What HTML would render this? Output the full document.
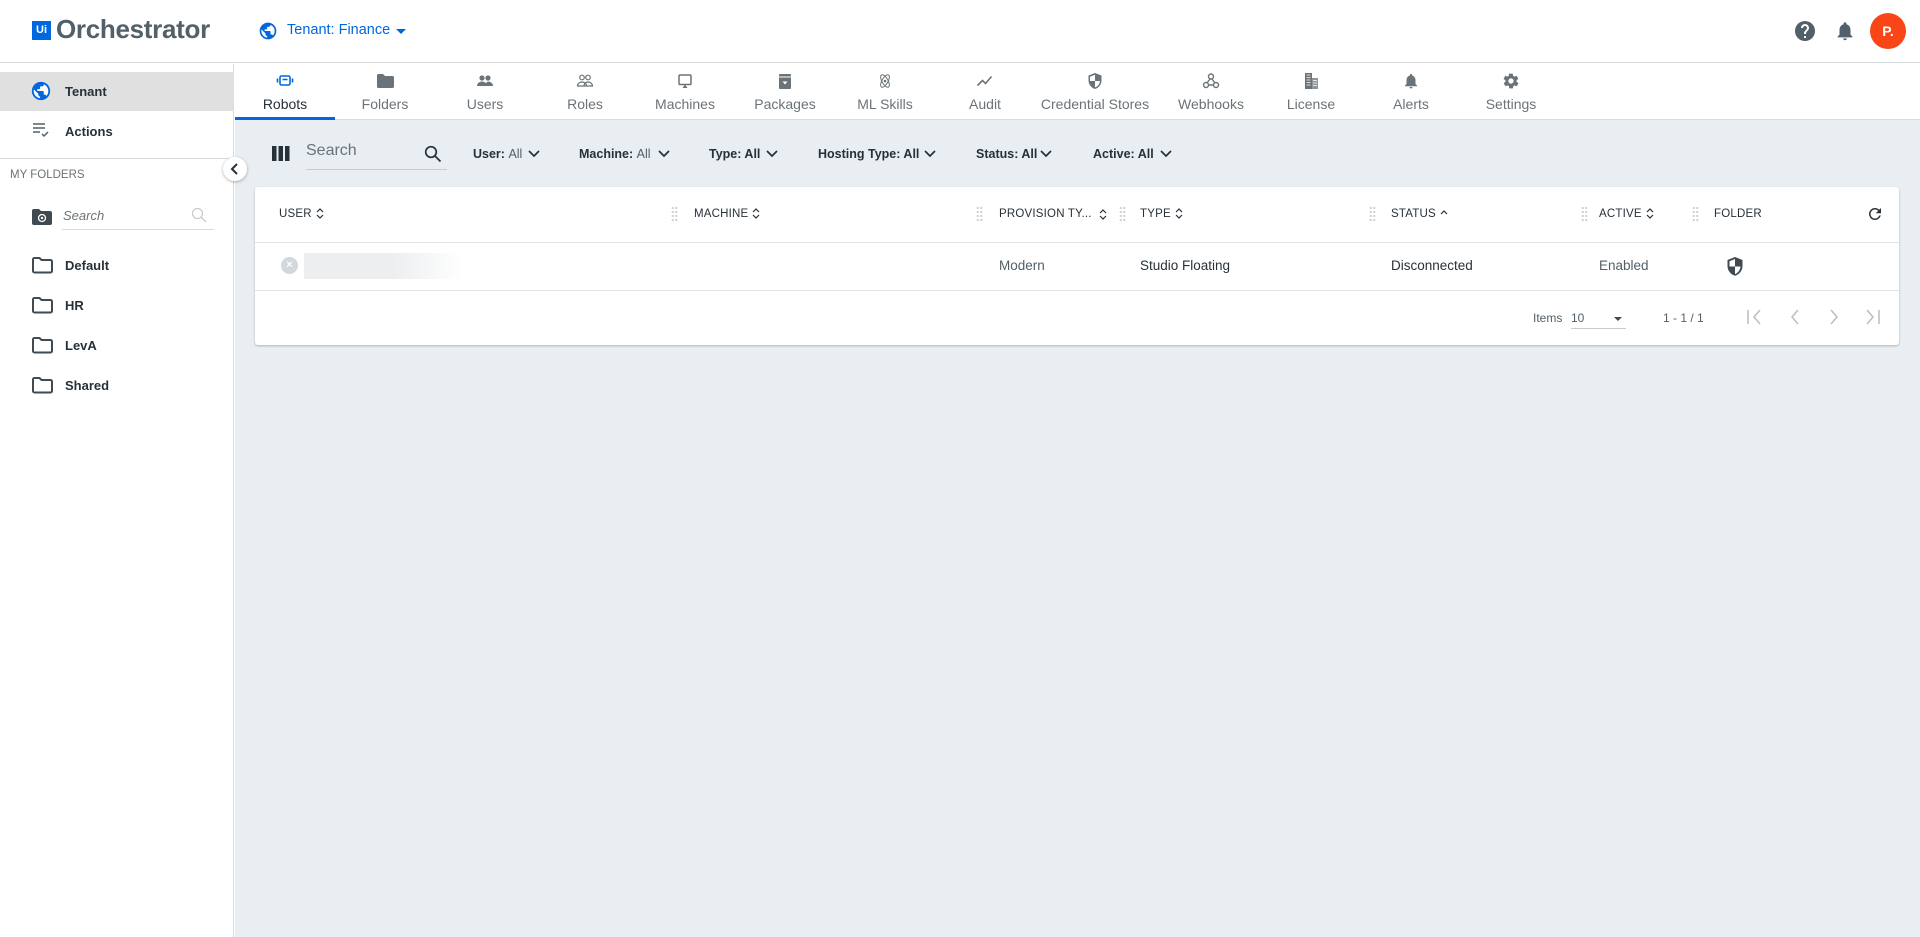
<!DOCTYPE html>
<html><head><meta charset="utf-8"><style>
*{box-sizing:border-box;margin:0;padding:0}
body{width:1920px;height:937px;overflow:hidden;font-family:"Liberation Sans",Arial,sans-serif;background:#fff;position:relative;color:#273139}
.a{position:absolute}
.hdr{left:0;top:0;width:1920px;height:63px;background:#fff;border-bottom:1px solid #d8dbdd}
.side{left:0;top:64px;width:234px;height:873px;background:#fff;border-right:1px solid #d8dbdd}
.main{left:235px;top:64px;width:1685px;height:873px;background:#e9eef2}
.tabs{left:235px;top:64px;width:1685px;height:56px;background:#fff;border-bottom:1px solid #d8dbdd}
.tab{position:absolute;top:0;width:100px;height:56px;text-align:center;color:#6b7378;font-size:14px}
.tab svg{position:absolute;left:41px;top:8px}
.tab span{position:absolute;left:0;right:0;top:32px}
.flt{font-size:12.5px;color:#273139;font-weight:bold;top:147px}
.flt b{font-weight:normal;color:#526069}
.card{left:255px;top:187px;width:1644px;height:158px;background:#fff;border-radius:3px;box-shadow:0 1px 2px rgba(0,0,0,.25)}
.th{font-size:11.5px;color:#273139;top:21px;letter-spacing:.2px}
.srt{display:inline-block;vertical-align:middle;margin-left:4px}
.grip{top:19px;width:7px;height:15px;background-image:radial-gradient(circle,#ccd2d6 1px,transparent 1.3px);background-size:3.5px 4px}
.fold{font-size:13px;font-weight:bold;color:#273139;left:65px}
</style></head><body>
<div class="a hdr"></div>
<div class="a" style="left:32px;top:21px;width:19px;height:19px;background:#0067df;color:#fff;font-size:11px;font-weight:bold;line-height:19px;text-align:center">Ui</div>
<div class="a" style="left:56px;top:14px;font-size:26px;color:#526069;font-weight:bold;letter-spacing:-.3px">Orchestrator</div>
<svg class="a" style="left:258px;top:21px" width="20" height="20" viewBox="0 0 24 24"><circle cx="12" cy="12" r="10" fill="#0067df"/><path d="M11 19.9C7 19.4 4 16 4 12c0-.6.1-1.2.2-1.8L9 15v1c0 1.1.9 2 2 2v1.9zm6.9-2.5c-.3-.8-1-1.4-1.9-1.4h-1v-3c0-.6-.4-1-1-1H8v-2h2c.6 0 1-.4 1-1V7h2c1.1 0 2-.9 2-2v-.4c2.9 1.2 5 4.1 5 7.4 0 2.1-.8 4-2.1 5.4z" fill="#fff"/></svg>
<div class="a" style="left:287px;top:22px;font-size:14.5px;color:#0067df">Tenant: Finance</div>
<div class="a" style="left:396px;top:29px;border:5px solid transparent;border-top-color:#0067df"></div>
<svg class="a" style="left:1793px;top:19px" width="24" height="24" viewBox="0 0 24 24"><path fill="#526069" d="M12 2a10 10 0 1 0 0 20 10 10 0 0 0 0-20zm1 17h-2v-2h2v2zm2.1-7.8-.9.9C13.5 12.9 13 13.5 13 15h-2v-.5c0-1.1.4-2.1 1.2-2.8l1.2-1.3c.4-.4.6-.9.6-1.4 0-1.1-.9-2-2-2s-2 .9-2 2H8c0-2.2 1.8-4 4-4s4 1.8 4 4c0 .9-.4 1.700-.9 2.2z"/></svg>
<svg class="a" style="left:1834px;top:19px" width="22" height="24" viewBox="0 0 24 24"><path fill="#526069" d="M12 22c1.1 0 2-.9 2-2h-4c0 1.1.9 2 2 2zm6-6v-5c0-3.1-1.6-5.6-4.5-6.3V4c0-.8-.7-1.5-1.5-1.5s-1.5.7-1.5 1.5v.7C7.6 5.4 6 7.900 6 11v5l-2 2v1h16v-1l-2-2z"/></svg>
<div class="a" style="left:1870px;top:13px;width:36px;height:36px;border-radius:50%;background:#fa4616;color:#fff;font-weight:bold;font-size:14px;line-height:36px;text-align:center">P.</div>

<div class="a side"></div>
<div class="a" style="left:0;top:72px;width:234px;height:39px;background:#e0e0e0"></div>
<svg class="a" style="left:30px;top:80px" width="22" height="22" viewBox="0 0 24 24"><circle cx="12" cy="12" r="10" fill="#0067df"/><path d="M11 19.9C7 19.4 4 16 4 12c0-.6.1-1.2.2-1.8L9 15v1c0 1.1.9 2 2 2v1.9zm6.9-2.5c-.3-.8-1-1.4-1.9-1.4h-1v-3c0-.6-.4-1-1-1H8v-2h2c.6 0 1-.4 1-1V7h2c1.1 0 2-.9 2-2v-.4c2.9 1.2 5 4.1 5 7.4 0 2.1-.8 4-2.1 5.4z" fill="#fff"/></svg>
<div class="a fold" style="top:84px">Tenant</div>
<svg class="a" style="left:32px;top:121px" width="18" height="18" viewBox="0 0 18 18"><path d="M1 3h12M1 7h12M1 11h7" stroke="#526069" stroke-width="1.5"/><path d="M10 13l2 2 4-4" stroke="#526069" stroke-width="1.5" fill="none"/></svg>
<div class="a fold" style="top:124px">Actions</div>
<div class="a" style="left:0;top:158px;width:234px;height:1px;background:#d8dbdd"></div>
<div class="a" style="left:10px;top:169px;font-size:11.5px;color:#6b7378">MY FOLDERS</div>
<svg class="a" style="left:32px;top:209px" width="20" height="16" viewBox="0 0 20 16"><path d="M0 2a2 2 0 0 1 2-2h5l2 2h9a2 2 0 0 1 2 2v10a2 2 0 0 1-2 2H2a2 2 0 0 1-2-2z" fill="#3f4a52"/><circle cx="10" cy="9" r="3.5" stroke="#fff" stroke-width="1.3" fill="none"/><circle cx="10" cy="9" r="1.2" fill="#fff"/></svg>
<div class="a" style="left:62px;top:208px;width:152px;height:22px;border-bottom:1px solid #d8dbdd;font-size:13px;font-style:italic;color:#6b7378;padding-left:1px">Search</div>
<svg class="a" style="left:191px;top:207px" width="16" height="16" viewBox="0 0 16 16"><circle cx="6.5" cy="6.5" r="5" stroke="#c8ccd0" stroke-width="1.3" fill="none"/><path d="M10 10l5 5" stroke="#c8ccd0" stroke-width="1.3"/></svg>
<svg class="a" style="left:32px;top:257px" width="21" height="17" viewBox="0 0 21 17"><path d="M1 2.5a1.5 1.5 0 0 1 1.5-1.5h5l2 2h9a1.5 1.5 0 0 1 1.5 1.5v9.5a1.5 1.5 0 0 1-1.5 1.5h-16A1.5 1.5 0 0 1 1 14z" stroke="#3f4a52" stroke-width="2" fill="none"/></svg>
<div class="a fold" style="top:258px">Default</div>
<svg class="a" style="left:32px;top:297px" width="21" height="17" viewBox="0 0 21 17"><path d="M1 2.5a1.5 1.5 0 0 1 1.5-1.5h5l2 2h9a1.5 1.5 0 0 1 1.5 1.5v9.5a1.5 1.5 0 0 1-1.5 1.5h-16A1.5 1.5 0 0 1 1 14z" stroke="#3f4a52" stroke-width="2" fill="none"/></svg>
<div class="a fold" style="top:298px">HR</div>
<svg class="a" style="left:32px;top:337px" width="21" height="17" viewBox="0 0 21 17"><path d="M1 2.5a1.5 1.5 0 0 1 1.5-1.5h5l2 2h9a1.5 1.5 0 0 1 1.5 1.5v9.5a1.5 1.5 0 0 1-1.5 1.5h-16A1.5 1.5 0 0 1 1 14z" stroke="#3f4a52" stroke-width="2" fill="none"/></svg>
<div class="a fold" style="top:338px">LevA</div>
<svg class="a" style="left:32px;top:377px" width="21" height="17" viewBox="0 0 21 17"><path d="M1 2.5a1.5 1.5 0 0 1 1.5-1.5h5l2 2h9a1.5 1.5 0 0 1 1.5 1.5v9.5a1.5 1.5 0 0 1-1.5 1.5h-16A1.5 1.5 0 0 1 1 14z" stroke="#3f4a52" stroke-width="2" fill="none"/></svg>
<div class="a fold" style="top:378px">Shared</div>

<div class="a main"></div>
<div class="a tabs"></div>
<div class="a" style="left:223px;top:157px;width:24px;height:24px;border-radius:50%;background:#fff;box-shadow:0 1px 3px rgba(0,0,0,.3);z-index:5"></div>
<svg class="a" style="left:229px;top:163px;z-index:6" width="12" height="12" viewBox="0 0 12 12"><path d="M8 1L3 6l5 5" stroke="#273139" stroke-width="2" fill="none"/></svg>
<div class="a" style="left:235px;top:64px;width:1685px;height:56px">
<div class="tab" style="left:0;color:#273139"><svg width="18" height="18" viewBox="0 0 18 18"><rect x="4" y="4" width="10" height="9" rx="1.5" stroke="#0067df" stroke-width="1.6" fill="none"/><path d="M6.5 7.5h5" stroke="#0067df" stroke-width="1.5"/><path d="M1.5 6.5v4M16.5 6.5v4" stroke="#0067df" stroke-width="1.6"/></svg><span>Robots</span></div>
<div class="a" style="left:0;top:53px;width:100px;height:3px;background:#0067df"></div>
<div class="tab" style="left:100px"><svg width="18" height="18" viewBox="0 0 18 18"><path d="M1 3.5a1.5 1.5 0 0 1 1.5-1.5h4.5l2 2h7.5a1.5 1.5 0 0 1 1.5 1.5v9a1.5 1.5 0 0 1-1.5 1.5h-14A1.5 1.5 0 0 1 1 14.5z" fill="#6b7378"/></svg><span>Folders</span></div>
<div class="tab" style="left:200px"><svg width="18" height="18" viewBox="0 0 18 18"><circle cx="6" cy="6" r="2.6" fill="#6b7378"/><circle cx="12" cy="6" r="2.6" fill="#6b7378"/><path d="M1 14c0-3 3-4.5 5-4.5s5 1.5 5 4.5zM9 14c0-2 1-3.5 3-4.5 2 0 5 1.5 5 4.5z" fill="#6b7378"/></svg><span>Users</span></div>
<div class="tab" style="left:300px"><svg width="18" height="18" viewBox="0 0 18 18"><circle cx="6" cy="5.5" r="2.3" stroke="#6b7378" stroke-width="1.2" fill="none"/><circle cx="12" cy="5.5" r="2.3" stroke="#6b7378" stroke-width="1.2" fill="none"/><path d="M1.5 14c0-2.5 2.5-4 4.5-4s4.5 1.5 4.5 4zM8 14c0-2.5 2-4 4-4s4.5 1.5 4.5 4z" stroke="#6b7378" stroke-width="1.2" fill="none"/></svg><span>Roles</span></div>
<div class="tab" style="left:400px"><svg width="18" height="18" viewBox="0 0 18 18"><rect x="3" y="3" width="12" height="9.5" rx="1" stroke="#6b7378" stroke-width="1.5" fill="none"/><path d="M6.5 16l2.5-3.5 2.5 3.5z" fill="#6b7378"/></svg><span>Machines</span></div>
<div class="tab" style="left:500px"><svg width="18" height="18" viewBox="0 0 18 18"><rect x="3" y="2" width="12" height="15" rx="1" fill="#6b7378"/><path d="M3 5h12" stroke="#fff" stroke-width="1"/><path d="M6.5 9.5L9 12.5l2.5-3z" fill="#fff"/></svg><span>Packages</span></div>
<div class="tab" style="left:600px"><svg width="18" height="18" viewBox="0 0 18 18"><ellipse cx="9" cy="9" rx="3" ry="7" stroke="#6b7378" stroke-width="1" fill="none" transform="rotate(30 9 9)"/><ellipse cx="9" cy="9" rx="3" ry="7" stroke="#6b7378" stroke-width="1" fill="none" transform="rotate(-30 9 9)"/><circle cx="9" cy="9" r="1.3" fill="#6b7378"/></svg><span>ML Skills</span></div>
<div class="tab" style="left:700px"><svg width="18" height="18" viewBox="0 0 18 18"><path d="M1.5 13.5l5-5 3 3 6-7" stroke="#6b7378" stroke-width="1.6" fill="none"/></svg><span>Audit</span></div>
<div class="tab" style="left:795px;width:130px"><svg style="left:56px" width="18" height="18" viewBox="0 0 18 18"><path d="M9 1L2.5 3.5v5c0 4 3 7.5 6.5 8.5 3.5-1 6.5-4.5 6.5-8.5v-5z" fill="#6b7378"/><path d="M9 2.7v6.3H4v-4.3zM9 9h5c-.3 3-2.4 5.6-5 6.4z" fill="#fff"/></svg><span>Credential Stores</span></div>
<div class="tab" style="left:926px"><svg width="18" height="18" viewBox="0 0 18 18"><circle cx="9" cy="4.5" r="2.5" stroke="#6b7378" stroke-width="1.4" fill="none"/><circle cx="4" cy="13" r="2.5" stroke="#6b7378" stroke-width="1.4" fill="none"/><circle cx="14" cy="13" r="2.5" stroke="#6b7378" stroke-width="1.4" fill="none"/><path d="M8 7l-3 4M10 7l3 4M6.5 13h5" stroke="#6b7378" stroke-width="1.4"/></svg><span>Webhooks</span></div>
<div class="tab" style="left:1026px"><svg width="18" height="18" viewBox="0 0 18 18"><rect x="3" y="1" width="7" height="16" fill="#6b7378"/><rect x="10" y="6" width="6" height="11" fill="#8c959a"/><path d="M4.5 3h4M4.5 5.5h4M4.5 8h4M4.5 10.5h4M4.5 13h4M11 8.5h4M11 11h4M11 13.5h4" stroke="#fff" stroke-width=".8"/></svg><span>License</span></div>
<div class="tab" style="left:1126px"><svg width="18" height="18" viewBox="0 0 24 24"><path fill="#6b7378" d="M12 22c1.1 0 2-.9 2-2h-4c0 1.1.9 2 2 2zm6-6v-5c0-3.1-1.6-5.6-4.5-6.3V4c0-.8-.7-1.5-1.5-1.5s-1.5.7-1.5 1.5v.7C7.6 5.4 6 7.9 6 11v5l-2 2v1h16v-1l-2-2z"/></svg><span>Alerts</span></div>
<div class="tab" style="left:1226px"><svg width="18" height="18" viewBox="0 0 24 24"><path fill="#6b7378" d="M19.4 13c0-.3.1-.6.1-1s0-.7-.1-1l2.1-1.6c.2-.2.2-.4.1-.6l-2-3.5c-.1-.2-.4-.3-.6-.2l-2.5 1c-.5-.4-1.1-.7-1.7-1l-.4-2.6c0-.2-.2-.4-.5-.4h-4c-.2 0-.5.2-.5.4l-.4 2.6c-.6.3-1.2.6-1.7 1l-2.5-1c-.2-.1-.5 0-.6.2l-2 3.5c-.1.2-.1.5.1.6L4.6 11c0 .3-.1.6-.1 1s0 .7.1 1l-2.1 1.6c-.2.2-.2.4-.1.6l2 3.5c.1.2.4.3.6.2l2.5-1c.5.4 1.1.7 1.7 1l.4 2.6c0 .2.2.4.5.4h4c.2 0 .5-.2.5-.4l.4-2.6c.6-.3 1.2-.6 1.7-1l2.5 1c.2.1.5 0 .6-.2l2-3.5c.1-.2.1-.5-.1-.6L19.4 13zM12 15.5c-1.9 0-3.5-1.6-3.5-3.5s1.6-3.5 3.5-3.5 3.5 1.6 3.5 3.5-1.6 3.5-3.5 3.5z"/></svg><span>Settings</span></div>
</div>

<svg class="a" style="left:272px;top:146px" width="18" height="15" viewBox="0 0 18 15"><rect x="0" y="0" width="4.5" height="15" fill="#273139"/><rect x="6.5" y="0" width="4.5" height="15" fill="#273139"/><rect x="13" y="0" width="4.5" height="15" fill="#273139"/></svg>
<div class="a" style="left:306px;top:142px;width:141px;height:28px;border-bottom:1px solid #c8ccd0;font-size:16px;color:#6b7378">Search</div>
<svg class="a" style="left:424px;top:145px" width="18" height="18" viewBox="0 0 18 18"><circle cx="7" cy="7" r="5.3" stroke="#273139" stroke-width="1.7" fill="none"/><path d="M11 11l5.5 5.5" stroke="#273139" stroke-width="1.8"/></svg>
<div class="a flt" style="left:473px">User: <b>All</b></div>
<div class="a flt" style="left:579px">Machine: <b>All</b></div>
<div class="a flt" style="left:709px">Type: All</div>
<div class="a flt" style="left:818px">Hosting Type: All</div>
<div class="a flt" style="left:976px">Status: All</div>
<div class="a flt" style="left:1093px">Active: All</div>
<svg class="a" style="left:528px;top:149px" width="12" height="9" viewBox="0 0 12 9"><path d="M1 2l5 5 5-5" stroke="#273139" stroke-width="1.7" fill="none"/></svg>
<svg class="a" style="left:658px;top:149px" width="12" height="9" viewBox="0 0 12 9"><path d="M1 2l5 5 5-5" stroke="#273139" stroke-width="1.7" fill="none"/></svg>
<svg class="a" style="left:766px;top:149px" width="12" height="9" viewBox="0 0 12 9"><path d="M1 2l5 5 5-5" stroke="#273139" stroke-width="1.7" fill="none"/></svg>
<svg class="a" style="left:924px;top:149px" width="12" height="9" viewBox="0 0 12 9"><path d="M1 2l5 5 5-5" stroke="#273139" stroke-width="1.7" fill="none"/></svg>
<svg class="a" style="left:1040px;top:149px" width="12" height="9" viewBox="0 0 12 9"><path d="M1 2l5 5 5-5" stroke="#273139" stroke-width="1.7" fill="none"/></svg>
<svg class="a" style="left:1160px;top:149px" width="12" height="9" viewBox="0 0 12 9"><path d="M1 2l5 5 5-5" stroke="#273139" stroke-width="1.7" fill="none"/></svg>

<div class="a card">
<div class="a th" style="left:24px">USER<svg class="srt" width="8" height="11" viewBox="0 0 8 11"><path d="M1 4l3-3 3 3M1 7l3 3 3-3" stroke="#273139" stroke-width="1.2" fill="none"/></svg></div>
<div class="a grip" style="left:416px"></div><div class="a th" style="left:439px">MACHINE<svg class="srt" width="8" height="11" viewBox="0 0 8 11"><path d="M1 4l3-3 3 3M1 7l3 3 3-3" stroke="#273139" stroke-width="1.2" fill="none"/></svg></div>
<div class="a grip" style="left:721px"></div><div class="a th" style="left:744px">PROVISION TY...</div><svg class="a" style="left:844px;top:22px" width="8" height="11" viewBox="0 0 8 11"><path d="M1 4l3-3 3 3M1 7l3 3 3-3" stroke="#273139" stroke-width="1.2" fill="none"/></svg>
<div class="a grip" style="left:864px"></div><div class="a th" style="left:885px">TYPE<svg class="srt" width="8" height="11" viewBox="0 0 8 11"><path d="M1 4l3-3 3 3M1 7l3 3 3-3" stroke="#273139" stroke-width="1.2" fill="none"/></svg></div>
<div class="a grip" style="left:1114px"></div><div class="a th" style="left:1136px">STATUS<svg class="srt" width="8" height="11" viewBox="0 0 8 11"><path d="M1 6l3-3 3 3" stroke="#273139" stroke-width="1.2" fill="none"/></svg></div>
<div class="a grip" style="left:1326px"></div><div class="a th" style="left:1344px">ACTIVE<svg class="srt" width="8" height="11" viewBox="0 0 8 11"><path d="M1 4l3-3 3 3M1 7l3 3 3-3" stroke="#273139" stroke-width="1.2" fill="none"/></svg></div>
<div class="a grip" style="left:1437px"></div><div class="a th" style="left:1459px">FOLDER</div>
<svg class="a" style="left:1611px;top:18px" width="18" height="18" viewBox="0 0 24 24"><path fill="#273139" d="M17.65 6.35A7.96 7.96 0 0 0 12 4a8 8 0 1 0 7.73 10h-2.08A6 6 0 1 1 12 6c1.66 0 3.14.69 4.22 1.78L13 11h7V4l-2.35 2.35z"/></svg>
<div class="a" style="left:0;top:55px;width:1644px;height:1px;background:#e0e3e5"></div>
<div class="a" style="left:26px;top:70px;width:17px;height:17px;border-radius:50%;background:#d3d8dc;color:#fff;font-size:11px;font-weight:bold;text-align:center;line-height:17px">×</div>
<div class="a" style="left:49px;top:66px;width:160px;height:26px;background:linear-gradient(90deg,#eceef0 55%,#fff)"></div>
<div class="a" style="left:744px;top:71px;font-size:13.5px;color:#526069">Modern</div>
<div class="a" style="left:885px;top:71px;font-size:13.5px;color:#273139">Studio Floating</div>
<div class="a" style="left:1136px;top:71px;font-size:13.5px;color:#273139">Disconnected</div>
<div class="a" style="left:1344px;top:71px;font-size:13.5px;color:#526069">Enabled</div>
<svg class="a" style="left:1471px;top:69px" width="18" height="21" viewBox="0 0 18 21"><path d="M9 1L1.5 4v6c0 4.5 3.2 8.6 7.5 9.7 4.3-1.1 7.5-5.2 7.5-9.700V4z" fill="#3f4a52"/><path d="M9 3v7.5H3.5v-5.2zM9 10.5h5.5c-.4 3.6-2.5 6.6-5.5 7.5z" fill="#fff"/></svg>
<div class="a" style="left:0;top:103px;width:1644px;height:1px;background:#e0e3e5"></div>
<div class="a" style="left:1278px;top:124px;font-size:12px;color:#526069">Items</div>
<div class="a" style="left:1316px;top:118px;width:55px;height:24px;border-bottom:1px solid #c8ccd0;font-size:12px;color:#526069;padding-top:6px">10</div>
<div class="a" style="left:1359px;top:130px;border:4.5px solid transparent;border-top-color:#3f4a52"></div>
<div class="a" style="left:1408px;top:124px;font-size:12px;color:#526069">1 - 1 / 1</div>
<svg class="a" style="left:1490px;top:121px" width="20" height="18" viewBox="0 0 20 18"><path d="M3 2v14M15 2L9 9l6 7" stroke="#b8bec3" stroke-width="1.5" fill="none"/></svg>
<svg class="a" style="left:1532px;top:121px" width="16" height="18" viewBox="0 0 16 18"><path d="M11 2L5 9l6 7" stroke="#b8bec3" stroke-width="1.5" fill="none"/></svg>
<svg class="a" style="left:1571px;top:121px" width="16" height="18" viewBox="0 0 16 18"><path d="M5 2l6 7-6 7" stroke="#b8bec3" stroke-width="1.5" fill="none"/></svg>
<svg class="a" style="left:1608px;top:121px" width="20" height="18" viewBox="0 0 20 18"><path d="M4 2l6 7-6 7M16 2v14" stroke="#b8bec3" stroke-width="1.5" fill="none"/></svg>
</div>
</body></html>
